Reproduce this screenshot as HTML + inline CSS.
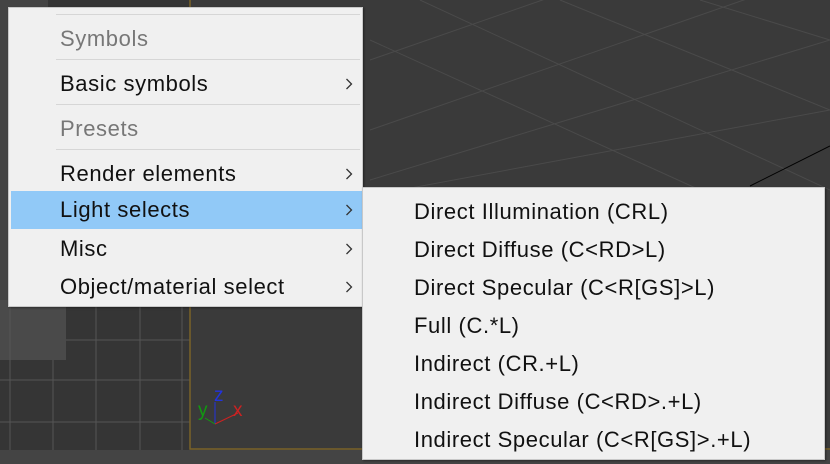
<!DOCTYPE html>
<html><head><style>
body{margin:0;width:830px;height:464px;overflow:hidden;background:#3a3a3a;position:relative;font-family:"Liberation Sans",sans-serif}
.abs{position:absolute}
.menu{position:absolute;background:#f0f0f0;border:1px solid #c8c8c8;box-shadow:1px 1px 2px rgba(0,0,0,.4)}
.it{position:absolute;left:0;right:0;height:38px;line-height:38px;font-size:22px;letter-spacing:0.6px;color:#111;white-space:nowrap}
.hd{color:#777}
.sep{position:absolute;height:1px;background:#d6d6d6}
.ar{position:absolute;right:9px;top:13px;width:8px;height:12px}
</style></head><body>
<svg class="abs" style="left:0;top:0" width="830" height="464">
<rect x="0" y="0" width="190" height="450" fill="#353535"/>
<rect x="0" y="300" width="66" height="60" fill="#4a4a4a"/>
<rect x="0" y="0" width="48" height="300" fill="#444"/>
<g stroke="#555" stroke-width="1">
<line x1="10" y1="300" x2="10" y2="450"/><line x1="53" y1="360" x2="53" y2="450"/><line x1="96" y1="300" x2="96" y2="450"/><line x1="140" y1="300" x2="140" y2="450"/><line x1="182" y1="300" x2="182" y2="450"/>
<line x1="0" y1="380" x2="190" y2="380"/><line x1="0" y1="422" x2="190" y2="422"/><line x1="66" y1="340" x2="190" y2="340"/>
</g>
<g stroke="#4a4a4a" stroke-width="1">
<line x1="370" y1="60" x2="830" y2="-100"/><line x1="370" y1="130" x2="830" y2="-30"/><line x1="370" y1="180" x2="830" y2="40"/><line x1="400" y1="190" x2="830" y2="110"/>
<line x1="420" y1="0" x2="830" y2="190"/><line x1="560" y1="0" x2="830" y2="110"/><line x1="700" y1="0" x2="830" y2="40"/><line x1="370" y1="40" x2="700" y2="190"/>
</g>
<line x1="750" y1="186" x2="830" y2="146" stroke="#000"/>
<rect x="190" y="-2" width="650" height="451" fill="none" stroke="#7a6328" stroke-width="1.5"/>
<rect x="0" y="450" width="830" height="14" fill="#444"/>
<line x1="215" y1="402" x2="215" y2="424" stroke="#2233dd"/><line x1="215" y1="424" x2="238" y2="413" stroke="#cc2222"/><line x1="215" y1="424" x2="205" y2="418" stroke="#119911"/>
<text x="214" y="401" fill="#2233dd" font-size="19" font-family="Liberation Sans">z</text>
<text x="198" y="416" fill="#119911" font-size="19" font-family="Liberation Sans">y</text>
<text x="233" y="416" fill="#cc2222" font-size="19" font-family="Liberation Sans">x</text>
</svg>
<div class="menu" style="left:8px;top:7px;width:353px;height:298px">
<div class="sep" style="left:47px;right:2px;top:6px"></div>
<div class="it hd" style="top:12px;padding-left:51px">Symbols</div>
<div class="sep" style="left:47px;right:2px;top:51px"></div>
<div class="it" style="top:57px;padding-left:51px">Basic symbols<svg class="ar"><path d="M1.5 1L6.5 6L1.5 11" fill="none" stroke="#333" stroke-width="1.3"/></svg></div>
<div class="sep" style="left:47px;right:2px;top:96px"></div>
<div class="it hd" style="top:102px;padding-left:51px">Presets</div>
<div class="sep" style="left:47px;right:2px;top:141px"></div>
<div class="it" style="top:147px;padding-left:51px">Render elements<svg class="ar"><path d="M1.5 1L6.5 6L1.5 11" fill="none" stroke="#333" stroke-width="1.3"/></svg></div>
<div class="it" style="top:183px;left:2px;padding-left:49px;background:#91c9f7">Light selects<svg class="ar"><path d="M1.5 1L6.5 6L1.5 11" fill="none" stroke="#333" stroke-width="1.3"/></svg></div>
<div class="it" style="top:222px;padding-left:51px">Misc<svg class="ar"><path d="M1.5 1L6.5 6L1.5 11" fill="none" stroke="#333" stroke-width="1.3"/></svg></div>
<div class="it" style="top:260px;padding-left:51px">Object/material select<svg class="ar"><path d="M1.5 1L6.5 6L1.5 11" fill="none" stroke="#333" stroke-width="1.3"/></svg></div>
</div>
<div class="menu" style="left:362px;top:187px;width:461px;height:271px">
<div class="it" style="top:5px;padding-left:51px">Direct Illumination (CRL)</div>
<div class="it" style="top:43px;padding-left:51px">Direct Diffuse (C&lt;RD&gt;L)</div>
<div class="it" style="top:81px;padding-left:51px">Direct Specular (C&lt;R[GS]&gt;L)</div>
<div class="it" style="top:119px;padding-left:51px">Full (C.*L)</div>
<div class="it" style="top:157px;padding-left:51px">Indirect (CR.+L)</div>
<div class="it" style="top:195px;padding-left:51px">Indirect Diffuse (C&lt;RD&gt;.+L)</div>
<div class="it" style="top:233px;padding-left:51px">Indirect Specular (C&lt;R[GS]&gt;.+L)</div>
</div>
</body></html>
